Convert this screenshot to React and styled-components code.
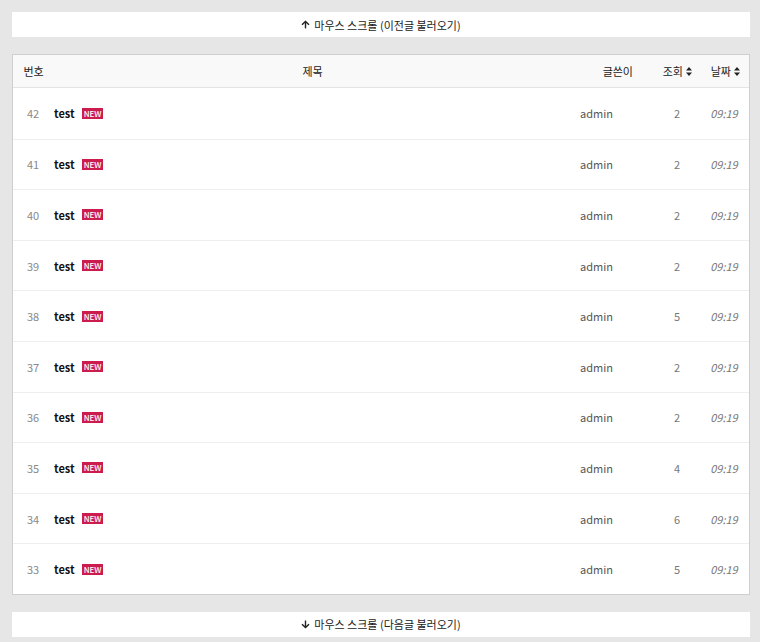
import React from "react";
import styled, { createGlobalStyle } from "styled-components";
import { FaArrowUp, FaArrowDown } from "react-icons/fa";

const GlobalStyle = createGlobalStyle`
  html, body {
    margin: 0;
    padding: 0;
    background: #e6e6e6;
  }
  body {
    font-family: "Noto Sans CJK KR", "Noto Sans", sans-serif;
    color: #222;
  }
`;

const Page = styled.div`
  padding: 12px 10px 12px 12px;
  display: flex;
  flex-direction: column;
  gap: 17px;
`;

const LoadBar = styled.div`
  height: 25px;
  background: #fff;
  display: flex;
  align-items: center;
  justify-content: center;
  gap: 4px;
  font-size: 11px;
  color: #222;

  svg {
    width: 9px;
    height: 9px;
  }
`;

const Board = styled.div`
  background: #fff;
  border: 1px solid #cfcfcf;
`;

const cols = "41px 1fr 70px 60px 48px";

const HeadRow = styled.div`
  display: grid;
  grid-template-columns: ${cols};
  height: 33px;
  box-sizing: border-box;
  align-items: center;
  background: #f9f9f9;
  border-bottom: 1px solid #e4e4e4;
  font-size: 11px;
  color: #222;
`;

const Th = styled.div`
  padding-right: ${(p) => p.$pr || 0}px;
  display: flex;
  align-items: center;
  justify-content: ${(p) => (p.$align === "right" ? "flex-end" : "center")};
  gap: 3px;
`;

const Row = styled.div`
  display: grid;
  grid-template-columns: ${cols};
  height: 50.6px;
  box-sizing: border-box;
  align-items: center;
  font-size: 11px;
  & + & {
    border-top: 1px solid #eeeeee;
  }
`;

const Num = styled.div`
  text-align: center;
  color: #888;
  padding-right: 1px;
`;

const Title = styled.div`
  display: flex;
  align-items: center;
  gap: 7px;
  font-weight: 700;
  color: #111;
`;

const NewBadge = styled.span`
  background: #cc1c4e;
  color: #fff;
  font-size: 8px;
  font-weight: 500;
  line-height: 11px;
  padding: 0 2px;
`;

const Author = styled.div`
  padding-left: 9px;
  color: #555;
`;

const Views = styled.div`
  text-align: right;
  padding-right: 21px;
  color: #777;
`;

const DateCell = styled.div`
  text-align: center;
  padding-right: 2px;
  font-style: italic;
  color: #777;
`;

const SortIcon = () => (
  <svg width="6" height="9" viewBox="0 0 6 9">
    <path d="M3 0 L6 3.6 L0 3.6 Z M3 9 L6 5.4 L0 5.4 Z" fill="#222" />
  </svg>
);

const posts = [
  { no: 42, views: 2 },
  { no: 41, views: 2 },
  { no: 40, views: 2 },
  { no: 39, views: 2 },
  { no: 38, views: 5 },
  { no: 37, views: 2 },
  { no: 36, views: 2 },
  { no: 35, views: 4 },
  { no: 34, views: 6 },
  { no: 33, views: 5 },
];

export default function App() {
  return (
    <>
      <GlobalStyle />
      <Page>
        <LoadBar>
          <FaArrowUp />
          <span>마우스 스크롤 (이전글 불러오기)</span>
        </LoadBar>
        <Board>
          <HeadRow>
            <Th>번호</Th>
            <Th>제목</Th>
            <Th $align="right" $pr={8}>글쓴이</Th>
            <Th $align="right" $pr={9}>
              조회 <SortIcon />
            </Th>
            <Th $align="right" $pr={9}>
              날짜 <SortIcon />
            </Th>
          </HeadRow>
          {posts.map((p) => (
            <Row key={p.no}>
              <Num>{p.no}</Num>
              <Title>
                test <NewBadge>NEW</NewBadge>
              </Title>
              <Author>admin</Author>
              <Views>{p.views}</Views>
              <DateCell>09:19</DateCell>
            </Row>
          ))}
        </Board>
        <LoadBar>
          <FaArrowDown />
          <span>마우스 스크롤 (다음글 불러오기)</span>
        </LoadBar>
      </Page>
    </>
  );
}
